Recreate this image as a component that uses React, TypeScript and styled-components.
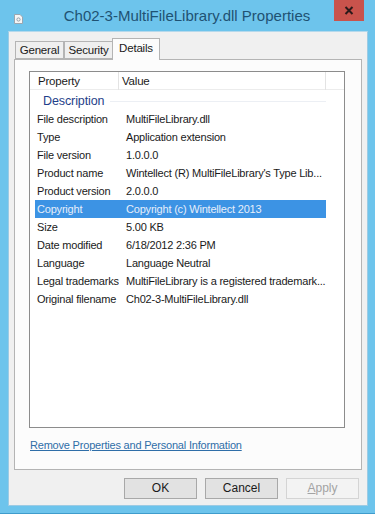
import React from "react";
import styled, { createGlobalStyle } from "styled-components";

const Global = createGlobalStyle`
  html, body { margin: 0; padding: 0; background: #6cc3ec; }
  * { box-sizing: border-box; }
`;

const Window = styled.div`
  width: 375px;
  height: 514px;
  background: #6dc4ec;
  display: flex;
  flex-direction: column;
  font-family: "Liberation Sans", Arial, sans-serif;
  color: #1a1a1a;
  border-bottom: 1px solid #3f9ccc;
`;

const TitleBar = styled.div`
  height: 31px;
  display: flex;
  align-items: flex-start;
  position: relative;
`;

const TitleIcon = styled.div`
  position: absolute;
  left: 14px;
  top: 10px;
  width: 9px;
  height: 10px;
`;

const Title = styled.div`
  flex: 1;
  text-align: center;
  font-size: 15px;
  line-height: 31px;
  color: #1f5273;
  padding-right: 1px;
`;

const CloseButton = styled.div`
  position: absolute;
  right: 11px;
  top: 0;
  width: 30px;
  height: 21px;
  background: #c9534c;
  display: flex;
  align-items: center;
  justify-content: center;
`;

const Client = styled.div`
  flex: 1;
  margin: 0 7px 7px 8px;
  background: #f0f0f0;
  border: 1px solid #9ccbe4;
  border-top-color: #b5d9ec;
  display: flex;
  flex-direction: column;
  padding: 6px 5px 0 5px;
`;

const TabStrip = styled.div`
  display: flex;
  align-items: flex-end;
  height: 21px;
  padding-left: 1px;
  position: relative;
  z-index: 1;
`;

const Tab = styled.div<{ $active?: boolean; $w: number }>`
  width: ${(p) => p.$w}px;
  height: ${(p) => (p.$active ? "22px" : "18px")};
  padding-top: ${(p) => (p.$active ? "2px" : "1px")};
  text-align: center;
  font-size: 11.5px;
  letter-spacing: -0.2px;
  line-height: 15px;
  border: 1px solid #b4b4b4;
  border-bottom: ${(p) => (p.$active ? "none" : "1px solid #b4b4b4")};
  background: ${(p) => (p.$active ? "#fcfcfc" : "#efefef")};
  margin-bottom: ${(p) => (p.$active ? "-1px" : "0")};
  margin-left: ${(p) => (p.$active ? "-1px" : "0")};
  & + & { border-left: ${(p) => (p.$active ? "1px solid #b4b4b4" : "none")}; }
`;

const Panel = styled.div`
  height: 411px;
  border: 1px solid #b4b4b4;
  background: #fcfcfc;
  padding: 11px 16px 0 14px;
  display: flex;
  flex-direction: column;
`;

const List = styled.div`
  height: 357px;
  border: 1px solid #8c8c8c;
  background: #ffffff;
  display: flex;
  flex-direction: column;
  padding: 0 0 0 5px;
`;

const Header = styled.div`
  display: grid;
  grid-template-columns: 84px 207px 1fr;
  height: 18px;
  border-bottom: 1px solid #ececec;
  margin-left: -5px;
  padding-left: 5px;
`;

const HeaderCell = styled.div<{ $last?: boolean }>`
  font-size: 11.5px;
  letter-spacing: -0.2px;
  line-height: 18px;
  padding-left: 3px;
  border-right: ${(p) => (p.$last ? "none" : "1px solid #e3e3e3")};
  color: #1a1a1a;
`;

const Group = styled.div`
  display: flex;
  align-items: center;
  height: 18px;
  margin-top: 2px;
  padding-left: 8px;
  gap: 6px;
  width: 291px;
`;

const GroupLabel = styled.div`
  font-size: 12.5px;
  letter-spacing: -0.1px;
  color: #1f3f8a;
`;

const GroupLine = styled.div`
  flex: 1;
  height: 1px;
  background: #eceff4;
`;

const Row = styled.div<{ $selected?: boolean }>`
  display: grid;
  grid-template-columns: 84px 207px;
  height: 18px;
  width: 291px;
  background: ${(p) => (p.$selected ? "#3c93e4" : "transparent")};
  color: ${(p) => (p.$selected ? "#e6eefa" : "#1a1a1a")};
`;

const Cell = styled.div`
  font-size: 11px;
  letter-spacing: -0.2px;
  line-height: 18px;
  padding-left: 2px;
  white-space: nowrap;
  overflow: hidden;
`;

const ValueCell = styled(Cell)`
  padding-left: 7px;
`;

const Link = styled.a`
  margin-top: 9px;
  margin-left: 1px;
  font-size: 11px;
  letter-spacing: -0.2px;
  color: #2f6ea8;
  text-decoration: underline;
  line-height: 16px;
`;

const ButtonRow = styled.div`
  display: flex;
  justify-content: flex-end;
  gap: 8px;
  margin-top: 8px;
  padding-right: 3px;
`;

const Button = styled.div<{ $disabled?: boolean }>`
  width: 73px;
  height: 21px;
  border: 1px solid ${(p) => (p.$disabled ? "#d4d4d4" : "#a8a8a8")};
  background: ${(p) => (p.$disabled ? "#f3f3f3" : "#e2e2e2")};
  color: ${(p) => (p.$disabled ? "#a3a3a3" : "#1a1a1a")};
  font-size: 12px;
  line-height: 19px;
  text-align: center;
`;

const rows: [string, string][] = [
  ["File description", "MultiFileLibrary.dll"],
  ["Type", "Application extension"],
  ["File version", "1.0.0.0"],
  ["Product name", "Wintellect (R) MultiFileLibrary's Type Lib..."],
  ["Product version", "2.0.0.0"],
  ["Copyright", "Copyright (c) Wintellect 2013"],
  ["Size", "5.00 KB"],
  ["Date modified", "6/18/2012 2:36 PM"],
  ["Language", "Language Neutral"],
  ["Legal trademarks", "MultiFileLibrary is a registered trademark..."],
  ["Original filename", "Ch02-3-MultiFileLibrary.dll"],
];

export default function App() {
  return (
    <>
      <Global />
      <Window>
        <TitleBar>
          <TitleIcon>
            <svg width="9" height="10" viewBox="0 0 9 10">
              <path d="M0.5 0.5 H6 L8.5 3 V9.5 H0.5 Z" fill="#f6f6f6" stroke="#9aa6b0" />
              <circle cx="4.5" cy="5.5" r="1.6" fill="none" stroke="#8a96a0" strokeWidth="0.9" />
            </svg>
          </TitleIcon>
          <Title>Ch02-3-MultiFileLibrary.dll Properties</Title>
          <CloseButton>
            <svg width="10" height="9" viewBox="0 0 10 9">
              <path d="M1.5 1 L8.5 8 M8.5 1 L1.5 8" stroke="#2b1a1a" strokeWidth="2" />
            </svg>
          </CloseButton>
        </TitleBar>
        <Client>
          <TabStrip>
            <Tab $w={49}>General</Tab>
            <Tab $w={49}>Security</Tab>
            <Tab $w={48} $active>
              Details
            </Tab>
          </TabStrip>
          <Panel>
            <List>
              <Header>
                <HeaderCell>Property</HeaderCell>
                <HeaderCell>Value</HeaderCell>
                <HeaderCell $last />
              </Header>
              <Group>
                <GroupLabel>Description</GroupLabel>
                <GroupLine />
              </Group>
              {rows.map(([k, v]) => (
                <Row key={k} $selected={k === "Copyright"}>
                  <Cell>{k}</Cell>
                  <ValueCell>{v}</ValueCell>
                </Row>
              ))}
            </List>
            <Link>Remove Properties and Personal Information</Link>
          </Panel>
          <ButtonRow>
            <Button>OK</Button>
            <Button>Cancel</Button>
            <Button $disabled>
              <u>A</u>pply
            </Button>
          </ButtonRow>
        </Client>
      </Window>
    </>
  );
}
